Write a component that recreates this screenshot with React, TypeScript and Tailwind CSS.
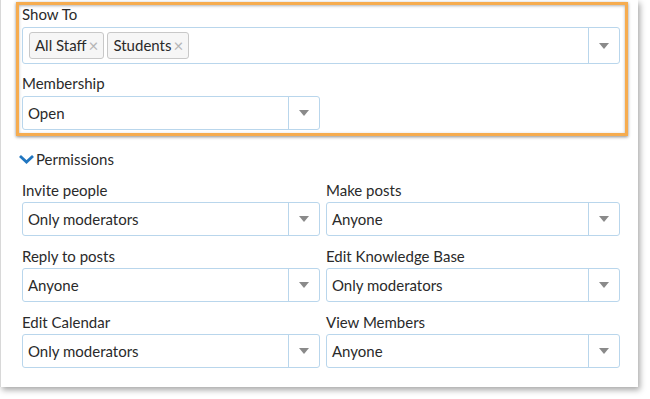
import React from "react";

function Arrow() {
  return (
    <svg width="10" height="6" viewBox="0 0 10 6" className="block">
      <polygon points="0,0 10,0 5,6" fill="#8a8a8a" />
    </svg>
  );
}

function Select({ value, h = "h-[34px]" }: { value: string; h?: string }) {
  return (
    <div className={`flex ${h} items-stretch rounded-[3px] border border-[#b9d6ec] bg-white`}>
      <div className="flex flex-1 items-center pl-[5px] text-[15px] text-[#2a2a2a]">{value}</div>
      <div className="flex w-[31px] items-center justify-center border-l border-[#b9d6ec]">
        <Arrow />
      </div>
    </div>
  );
}

function Field({ label, value }: { label: string; value: string }) {
  return (
    <div className="flex flex-col">
      <div className="h-[20px] text-[15px] leading-[20px] text-[#2a2a2a]">{label}</div>
      <div className="mt-[2px]">
        <Select value={value} />
      </div>
    </div>
  );
}

function Tag({ text }: { text: string }) {
  return (
    <div className="flex h-[27px] items-center gap-[2px] rounded-[3px] border border-[#c8c8c8] bg-[#f6f6f6] pl-[5px] pr-[5px] text-[15px] text-[#2a2a2a]">
      <span>{text}</span>
      <span className="text-[17px] leading-none text-[#b5b5b5]">×</span>
    </div>
  );
}

export default function App() {
  return (
    <div className="relative h-[399px] w-[650px] overflow-hidden bg-white" style={{ fontFamily: "Lato, 'Open Sans', sans-serif" }}>
      <div className="relative h-[387px] w-[638px] border-l border-[#d8d8d8] bg-white pl-[21px] pr-[18px] pt-[4px] shadow-[2px_3px_6px_rgba(0,0,0,0.35)]">
        <div className="h-[20px] text-[15px] leading-[20px] text-[#2a2a2a]">Show To</div>
        <div className="mt-[3px] flex h-[37px] items-stretch rounded-[3px] border border-[#b9d6ec] bg-white">
          <div className="flex flex-1 items-center gap-[3px] pl-[6px]">
            <Tag text="All Staff" />
            <Tag text="Students" />
          </div>
          <div className="flex w-[31px] items-center justify-center border-l border-[#b9d6ec]">
            <Arrow />
          </div>
        </div>
        <div className="mt-[9px] h-[20px] text-[15px] leading-[20px] text-[#2a2a2a]">Membership</div>
        <div className="mt-[3px] w-[298px]">
          <Select value="Open" />
        </div>

        <div className="mt-[19px] flex h-[20px] items-center text-[15px] text-[#2a2a2a]">
          <svg width="17" height="10" viewBox="0 0 17 10" className="-ml-[4px] mr-[1px]">
            <polyline points="2,2 8.5,8 15,2" fill="none" stroke="#2176c0" strokeWidth="2.8" />
          </svg>
          <span>Permissions</span>
        </div>

        <div className="mt-[11px] grid grid-cols-[298px_294px] gap-x-[6px] gap-y-[10px]">
          <Field label="Invite people" value="Only moderators" />
          <Field label="Make posts" value="Anyone" />
          <Field label="Reply to posts" value="Anyone" />
          <Field label="Edit Knowledge Base" value="Only moderators" />
          <Field label="Edit Calendar" value="Only moderators" />
          <Field label="View Members" value="Anyone" />
        </div>

        <div className="pointer-events-none absolute left-[15px] top-[2px] h-[134px] w-[612px] border-[3px] border-[#f6ac4f] shadow-[0_1px_3px_rgba(0,0,0,0.45),inset_0_1px_3px_rgba(0,0,0,0.3)]" />
      </div>
    </div>
  );
}
